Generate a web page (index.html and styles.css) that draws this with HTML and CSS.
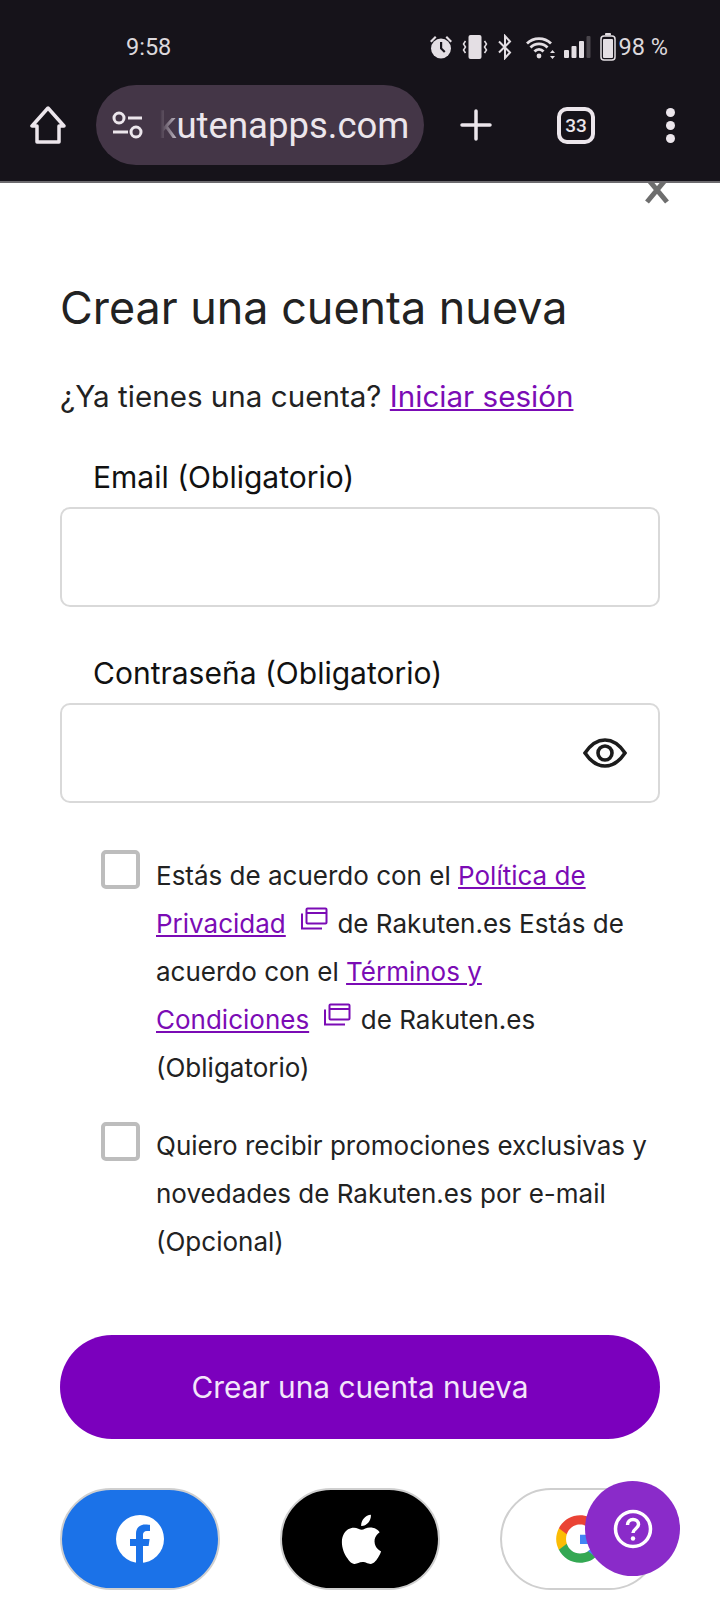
FILE: index.html
```html
<!DOCTYPE html>
<html lang="es">

<head>
    <meta charset="UTF-8">
    <meta name="viewport" content="width=device-width, initial-scale=1.0">
    <title>Crear una cuenta nueva</title>
    <link rel="stylesheet" href="styles.css">
</head>
<body>
<div class="phone">
    <div class="topbar">
        <div class="status">
            <span class="time">9:58</span>
            <div class="status-icons">
                <svg width="24" height="26" viewBox="0 0 24 26" fill="#e4dfe4"><circle cx="12" cy="14.500" r="10"/><path d="M1 7l5-5 1.500 1.500-5 5zM23 7l-5-5-1.500 1.500 5 5z"/><path d="M11 8h2.200v6l3.300 3.300-1.500 1.500-4-4z" fill="#16131a"/></svg>
                <svg width="26" height="26" viewBox="0 0 26 26" fill="#e4dfe4"><rect x="6.500" y="1" width="13" height="24" rx="2"/><path d="M3.500 7L1.500 10l2 3-2 3 2 3M22.500 7l2 3-2 3 2 3-2 3" fill="none" stroke="#e4dfe4" stroke-width="1.500"/></svg>
                <svg width="16" height="26" viewBox="0 0 16 26" fill="none" stroke="#e4dfe4" stroke-width="2"><path d="M2 7.500l11 11L8 24V2l5 5.500-11 11"/></svg>
                <svg class="ic-wifi" width="30" height="26" viewBox="0 0 30 26" fill="none" stroke="#e4dfe4" stroke-width="2.800"><path d="M1 9.500a17 17 0 0 1 24 0M4.500 13.500a12 12 0 0 1 17 0M8.500 17.500a6 6 0 0 1 9 0"/><circle cx="13" cy="22" r="2.400" fill="#e4dfe4" stroke="none"/><path d="M26.500 16l2.500 3h-5zM26.500 25l2.500-3h-5z" fill="#e4dfe4" stroke="none"/></svg>
                <svg class="ic-signal" width="28" height="26" viewBox="0 0 28 26" fill="#e4dfe4"><rect x="1" y="16" width="5" height="8" rx="1"/><rect x="8.500" y="12" width="5" height="12" rx="1"/><rect x="16" y="7" width="5" height="17" rx="1"/><rect x="23.500" y="2" width="4" height="22" rx="1" fill="#4a464c"/></svg>
                <svg width="16" height="28" viewBox="0 0 16 28" fill="#e4dfe4"><rect x="5" y="0" width="6" height="2.500" rx="1"/><rect x="1" y="3" width="14" height="24" rx="3" fill="none" stroke="#e4dfe4" stroke-width="1.500"/><rect x="3" y="6" width="10" height="19" rx="1"/></svg>
                <span class="pct">98 %</span>
            </div>
        </div>
        <div class="toolbar">
            <svg width="36" height="40" viewBox="0 0 36 40" fill="none" stroke="#ece6ec" stroke-width="3.500" stroke-linejoin="round"><path d="M18 3L2 21h5v16h22V21h5z"/></svg>
            <div class="urlbar">
                <svg width="32" height="28" viewBox="0 0 32 28" fill="none" stroke="#ece6ec" stroke-width="3"><circle cx="7" cy="7" r="5"/><circle cx="24" cy="21" r="5"/><path d="M16 7h14M1 21h15"/></svg>
                <span class="url"><span class="url-fade">k</span>utenapps.com</span>
            </div>
            <svg class="ic-plus" width="32" height="32" viewBox="0 0 32 32" stroke="#ece6ec" stroke-width="3.500" stroke-linecap="round"><path d="M16 2v28M2 16h28"/></svg>
            <div class="tabs">33</div>
            <div class="dots"><i></i><i></i><i></i></div>
        </div>
    </div>

    <div class="sheet">
        <svg class="close" width="26" height="26" viewBox="0 0 26 26" stroke="#6e6e6e" stroke-width="5"><path d="M3 -5L23 19M23 -5L3 19"/></svg>

        <h1>Crear una cuenta nueva</h1>
        <p class="login">¿Ya tienes una cuenta? <a href="#">Iniciar sesión</a></p>

        <label class="field-label" for="email">Email (Obligatorio)</label>
        <input class="field" type="text" id="email">

        <label class="field-label" for="pass">Contraseña (Obligatorio)</label>
        <div class="field-wrap">
            <input class="field" type="text" id="pass">
            <svg class="eye" width="44" height="32" viewBox="0 0 44 32" fill="none" stroke="#1c1c1c" stroke-width="3.600"><path d="M2 16C8 7 14 3 22 3s14 4 20 13c-6 9-12 13-20 13S8 25 2 16z"/><circle cx="22" cy="16" r="7"/></svg>
        </div>

        <div class="check-row first">
            <span class="box"></span>
            <p>Estás de acuerdo con el <a href="#">Política de Privacidad</a> <svg class="ext" width="28" height="26" viewBox="0 0 28 26" fill="none" stroke="#7b0bb5" stroke-width="2"><rect x="6.500" y="1.500" width="20" height="15" rx="1"/><path d="M6.500 6h20M2 6.500v15h20"/></svg> de Rakuten.es Estás de acuerdo con el <a href="#">Términos y<br>Condiciones</a> <svg class="ext" width="28" height="26" viewBox="0 0 28 26" fill="none" stroke="#7b0bb5" stroke-width="2"><rect x="6.500" y="1.500" width="20" height="15" rx="1"/><path d="M6.500 6h20M2 6.500v15h20"/></svg> de Rakuten.es<br>(Obligatorio)</p>
        </div>
        <div class="check-row">
            <span class="box"></span>
            <p>Quiero recibir promociones exclusivas y novedades de Rakuten.es por e-mail (Opcional)</p>
        </div>

        <button class="submit" type="button">Crear una cuenta nueva</button>

        <div class="social">
            <div class="soc fb">
                <svg width="48" height="48" viewBox="0 0 48 48"><circle cx="24" cy="24" r="24" fill="#fff"/><path d="M20 48V31h-6v-7h6v-5c0-6 3.600-9.500 9-9.500 2.600 0 5 .4 5 .4v6h-3c-3 0-4 1.800-4 3.700V24h6.600l-1 7H27v17z" fill="#1b72e8"/></svg>
            </div>
            <div class="soc apple">
                <svg width="43" height="50" viewBox="2 4 35 41" fill="#fff"><path d="M31 26.500c0-5 4-7.300 4.200-7.500-2.300-3.400-5.900-3.800-7.200-3.900-3-.3-6 1.800-7.500 1.800s-4-1.800-6.500-1.700c-3.300 0-6.400 1.900-8.100 4.900-3.500 6-.9 14.900 2.500 19.800 1.700 2.400 3.600 5.100 6.300 5 2.500-.1 3.500-1.600 6.500-1.600s3.900 1.600 6.500 1.600c2.700-.1 4.400-2.400 6-4.800 1.900-2.800 2.700-5.500 2.700-5.600-.1 0-5.300-2-5.400-8z"/><path d="M26 11c1.400-1.700 2.300-4 2-6.400-2 .1-4.400 1.300-5.800 3-1.300 1.500-2.400 3.900-2.100 6.200 2.200.2 4.500-1.100 5.900-2.800z"/></svg>
            </div>
            <div class="soc google">
                <svg width="52" height="52" viewBox="0 0 48 48"><path d="M45 24.500c0-1.600-.1-3.100-.4-4.500H24v8.500h11.800c-.5 2.700-2 5-4.400 6.600v5.500h7.100C42.700 36.800 45 31.200 45 24.500z" fill="#4285f4"/><path d="M24 46c5.900 0 10.900-2 14.500-5.300l-7.100-5.500c-2 1.300-4.500 2.100-7.400 2.100-5.700 0-10.500-3.800-12.200-9H4.500v5.700C8.100 41.100 15.500 46 24 46z" fill="#34a853"/><path d="M11.800 28.300c-.4-1.300-.7-2.800-.7-4.300s.3-3 .7-4.300V14H4.500C3 17 2 20.400 2 24s1 7 2.500 10z" fill="#fbbc05"/><path d="M24 10.700c3.200 0 6.100 1.100 8.400 3.300l6.300-6.300C34.900 4.200 29.900 2 24 2 15.500 2 8.100 6.900 4.500 14l7.300 5.700c1.700-5.200 6.500-9 12.200-9z" fill="#ea4335"/></svg>
            </div>
        </div>

        <div class="help">
            <svg width="40" height="40" viewBox="0 0 40 40" fill="none" stroke="#fff"><circle cx="20" cy="20" r="17.500" stroke-width="3.500"/><path d="M14.500 16c0-3.500 2.500-5.500 5.500-5.500s5.500 2 5.500 5c0 4-5.500 4.500-5.500 8.500" stroke-width="3.500"/><circle cx="20" cy="29.500" r="2.200" fill="#fff" stroke="none"/></svg>
        </div>
    </div>
</div>
</body>

</html>
```

FILE: styles.css
```css
html, body {
    margin: 0;
    padding: 0;
    background-color: #ffffff;
}

.phone {
    width: 720px;
    height: 1600px;
    overflow: hidden;
    display: flex;
    flex-direction: column;
}

.topbar {
    height: 183px;
    flex: none;
    box-sizing: border-box;
    background-color: #16131a;
    border-bottom: 2px solid #6c6a6e;
    font-family: Roboto, sans-serif;
}

.status {
    height: 85px;
    box-sizing: border-box;
    padding: 31px 52px 0 126px;
    display: flex;
    justify-content: space-between;
    align-items: flex-start;
    color: #dcd8dc;
}

.time {
    font-size: 23.500px;
    line-height: 32px;
}

.status-icons {
    display: flex;
    align-items: center;
    gap: 9px;
    height: 32px;
}

.ic-wifi {
    margin-left: 4px;
}

.ic-signal {
    margin-left: -2px;
}

.pct {
    font-size: 23.500px;
    margin-left: -6px;
}

.toolbar {
    display: flex;
    align-items: center;
    height: 80px;
    padding-left: 30px;
}

.urlbar {
    width: 328px;
    height: 80px;
    margin-left: 30px;
    box-sizing: border-box;
    padding-left: 16px;
    border-radius: 40px;
    background-color: #443647;
    display: flex;
    align-items: center;
    gap: 14px;
}

.url {
    font-size: 36.500px;
    color: #ece6ec;
    white-space: nowrap;
}

.url-fade {
    background-image: linear-gradient(to right, #443647 10%, #b5adb8 90%);
    -webkit-background-clip: text;
    background-clip: text;
    color: transparent;
}

.ic-plus {
    margin-left: 36px;
}

.tabs {
    width: 30px;
    height: 29px;
    margin-left: 65px;
    border: 4px solid #ece6ec;
    border-radius: 10px;
    font-size: 19px;
    font-weight: 500;
    line-height: 29px;
    text-align: center;
    color: #ece6ec;
}

.dots {
    margin-left: 71px;
    display: flex;
    flex-direction: column;
    gap: 4px;
}

.dots i {
    width: 9px;
    height: 9px;
    border-radius: 50%;
    background-color: #ece6ec;
}

.sheet {
    position: relative;
    flex: 1;
    padding: 0 60px;
    font-family: Inter, sans-serif;
    color: #222222;
}

.close {
    position: absolute;
    right: 50px;
    top: 0;
}

h1 {
    margin: 95px 0 0;
    font-size: 44.900px;
    line-height: 60px;
    font-weight: 400;
}

.login {
    margin: 38px 0 0;
    font-size: 29.600px;
    line-height: 40px;
}

a {
    color: #7b0bb5;
}

.field-label {
    display: block;
    margin: 41px 0 0 33px;
    font-size: 30px;
    line-height: 40px;
    color: #111111;
}

.field + .field-label {
    margin-top: 46px;
}

.field {
    display: block;
    width: 100%;
    height: 100px;
    margin-top: 10px;
    box-sizing: border-box;
    border: 2px solid #d9d9d9;
    border-radius: 10px;
    background-color: #ffffff;
}

.field-wrap {
    position: relative;
}

.eye {
    position: absolute;
    right: 33px;
    top: 34px;
}

.check-row {
    display: flex;
    margin: 30px 0 0 41px;
}

.check-row.first {
    margin-top: 47px;
}

.check-row p {
    margin: 0;
    font-size: 26px;
    line-height: 48px;
}

.check-row.first p {
    margin-top: 2px;
}

.box {
    flex: none;
    width: 39px;
    height: 39px;
    margin: 0 16px 0 0;
    box-sizing: border-box;
    border: 4px solid #bdbdbd;
    border-radius: 5px;
}

.ext {
    margin: 0 2px 0 7px;
}

.submit {
    display: block;
    width: 100%;
    height: 104px;
    margin-top: 69px;
    border: none;
    border-radius: 52px;
    background-color: #7b00bd;
    color: #f3e6fa;
    font-family: Inter, sans-serif;
    font-size: 29.800px;
}

.social {
    display: flex;
    gap: 60px;
    margin-top: 49px;
}

.soc {
    flex: none;
    width: 160px;
    height: 102px;
    box-sizing: border-box;
    border: 2px solid #cfcfcf;
    border-radius: 51px;
    display: flex;
    align-items: center;
    justify-content: center;
}

.fb {
    background-color: #1b72e8;
}

.apple {
    background-color: #000000;
}

.help {
    position: absolute;
    left: 585px;
    top: 1298px;
    width: 95px;
    height: 95px;
    border-radius: 50%;
    background-color: #8a2bc9;
    display: flex;
    align-items: center;
    justify-content: center;
}
```
